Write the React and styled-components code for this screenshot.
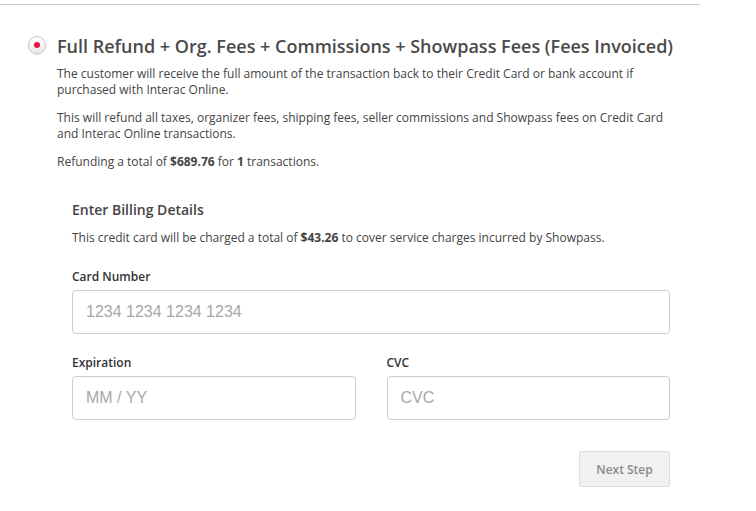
import React from 'react'
import styled, { createGlobalStyle } from 'styled-components'

const GlobalStyle = createGlobalStyle`
  body {
    margin: 0;
    background: #ffffff;
    font-family: 'Open Sans', 'Noto Sans', sans-serif;
    color: #444444;
  }
`

const Page = styled.div`
  width: 700px;
  padding-top: 4px;
`

const Divider = styled.div`
  height: 1px;
  background-color: #c8c8c8;
`

const Option = styled.div`
  display: flex;
  align-items: flex-start;
  padding: 27px 20px 0 28px;
`

const Radio = styled.span`
  flex: 0 0 auto;
  width: 18px;
  height: 18px;
  box-sizing: border-box;
  border-radius: 50%;
  border: 1px solid #c9c9c9;
  background: linear-gradient(#ffffff, #e9e9e9);
  box-shadow: 0 1px 2px rgba(0, 0, 0, 0.12);
  display: flex;
  align-items: center;
  justify-content: center;
  margin: 4px 11px 0 0;

  &::after {
    content: '';
    width: 6px;
    height: 6px;
    border-radius: 50%;
    background-color: #e5163a;
  }
`

const OptionBody = styled.div`
  flex: 1;
`

const OptionTitle = styled.h2`
  font-size: 18px;
  font-weight: 600;
  color: #4a4a4a;
  line-height: 28px;
  margin: 0 0 6px;
`

const Text = styled.p`
  font-size: 12px;
  line-height: 16px;
  color: #444444;
  margin: 0 0 12px;
`

const Billing = styled.div`
  width: 598px;
  margin: 30px 0 0 15px;
`

const BillingTitle = styled.h3`
  font-size: 14px;
  font-weight: 600;
  color: #444444;
  line-height: 20px;
  margin: 0 0 10px;
`

const Fields = styled.div`
  display: grid;
  grid-template-columns: 1fr 1fr;
  column-gap: 31px;
  row-gap: 21px;
  margin-top: 23px;
`

const Field = styled.div`
  grid-column: ${(p) => (p.$wide ? '1 / -1' : 'auto')};
`

const Label = styled.label`
  display: block;
  font-size: 12px;
  font-weight: 600;
  color: #333333;
  line-height: 16px;
  margin-bottom: 5px;
`

const Input = styled.input`
  display: block;
  width: 100%;
  height: 44px;
  box-sizing: border-box;
  border: 1px solid #cccccc;
  border-radius: 4px;
  padding: 0 13px;
  font-family: 'Liberation Sans', Arial, sans-serif;
  font-size: 16px;
  color: #333333;
  outline: none;

  &::placeholder {
    color: #a8a8a8;
  }
`

const Actions = styled.div`
  display: flex;
  justify-content: flex-end;
  margin-top: 31px;
`

const NextButton = styled.button`
  width: 91px;
  height: 36px;
  border: 1px solid #dddddd;
  border-radius: 2px;
  background-color: #f1f1f1;
  color: #8a8a8a;
  font-family: 'Open Sans', sans-serif;
  font-size: 12px;
  font-weight: 600;
  cursor: default;
`

const App = () => (
  <Page>
    <GlobalStyle />
    <Divider />
    <Option>
      <Radio />
      <OptionBody>
        <OptionTitle>Full Refund + Org. Fees + Commissions + Showpass Fees (Fees Invoiced)</OptionTitle>
        <Text>
          The customer will receive the full amount of the transaction back to their Credit Card or bank account if
          purchased with Interac Online.
        </Text>
        <Text>
          This will refund all taxes, organizer fees, shipping fees, seller commissions and Showpass fees on Credit Card
          and Interac Online transactions.
        </Text>
        <Text>
          Refunding a total of <b>$689.76</b> for <b>1</b> transactions.
        </Text>
        <Billing>
          <BillingTitle>Enter Billing Details</BillingTitle>
          <Text>
            This credit card will be charged a total of <b>$43.26</b> to cover service charges incurred by Showpass.
          </Text>
          <Fields>
            <Field $wide>
              <Label>Card Number</Label>
              <Input placeholder="1234 1234 1234 1234" />
            </Field>
            <Field>
              <Label>Expiration</Label>
              <Input placeholder="MM / YY" />
            </Field>
            <Field>
              <Label>CVC</Label>
              <Input placeholder="CVC" />
            </Field>
          </Fields>
          <Actions>
            <NextButton>Next Step</NextButton>
          </Actions>
        </Billing>
      </OptionBody>
    </Option>
  </Page>
)

export default App
